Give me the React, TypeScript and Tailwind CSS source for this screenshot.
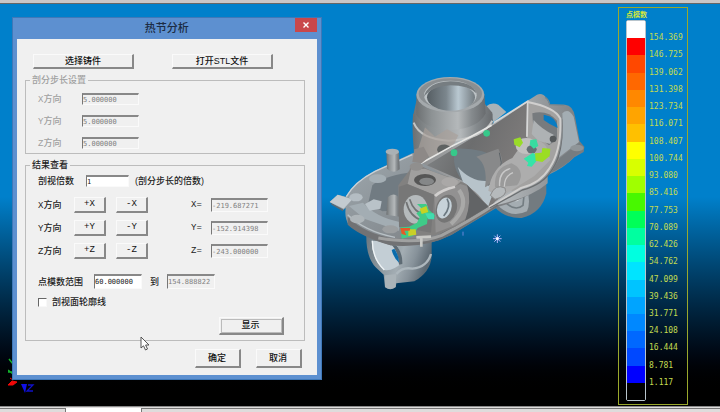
import { useState } from 'react';
import type { ButtonHTMLAttributes, InputHTMLAttributes } from 'react';
import clsx from 'clsx';

interface ScaleStep {
  color: string;
  value?: string;
}

const scale: ScaleStep[] = [
  { color: '#ffffff', value: '154.369' },
  { color: '#ff0000', value: '146.725' },
  { color: '#ff4800', value: '139.062' },
  { color: '#ff6800', value: '131.398' },
  { color: '#ff8800', value: '123.734' },
  { color: '#ffa400', value: '116.071' },
  { color: '#ffc000', value: '108.407' },
  { color: '#ffff00', value: '100.744' },
  { color: '#d8ff00', value: '93.080' },
  { color: '#a0ff00', value: '85.416' },
  { color: '#48f800', value: '77.753' },
  { color: '#00ff58', value: '70.089' },
  { color: '#00ffa0', value: '62.426' },
  { color: '#00ffe0', value: '54.762' },
  { color: '#00e4ff', value: '47.099' },
  { color: '#00c4ff', value: '39.436' },
  { color: '#00a4ff', value: '31.771' },
  { color: '#0088ff', value: '24.108' },
  { color: '#0068ff', value: '16.444' },
  { color: '#0048ff', value: '8.781' },
  { color: '#0000ff', value: '1.117' },
  { color: '#000000' },
];

const steps = [
  { axis: 'X', value: '5.000000' },
  { axis: 'Y', value: '5.000000' },
  { axis: 'Z', value: '5.000000' },
];

const positions = [
  { axis: 'X', value: '-219.687271' },
  { axis: 'Y', value: '-152.914398' },
  { axis: 'Z', value: '-243.000000' },
];

function PushButton({ className, ...props }: ButtonHTMLAttributes<HTMLButtonElement>) {
  return (
    <button
      type="button"
      className={clsx(
        'flex items-center justify-center border border-t-[#fafafa] border-r-2 border-r-[#888] border-b-2 border-b-[#888] border-l-[#fafafa] bg-[#f0f0f0] leading-none font-medium whitespace-nowrap text-[#111] active:bg-[#e4e4e4]',
        className,
      )}
      {...props}
    />
  );
}

function Field({ className, ...props }: InputHTMLAttributes<HTMLInputElement>) {
  return (
    <input
      className={clsx(
        'border border-t-2 border-t-[#888] border-r-[#fafafa] border-b-[#fafafa] border-l-[#777] bg-white font-["DejaVu_Sans_Mono",monospace] text-[7px] leading-none text-[#222] outline-none disabled:bg-[#f0f0f0] disabled:text-[#808080]',
        className,
      )}
      {...props}
    />
  );
}

function AxisLabel({ axis, className }: { axis: string; className: string }) {
  return (
    <span className={className}>
      <span className="font-['Liberation_Mono',monospace]">{axis}</span>方向
    </span>
  );
}

function Casting() {
  return (
    <svg viewBox="0 0 795 675" className="absolute top-[66px] left-[325px] w-[265px]" aria-hidden="true">
      <defs>
        <linearGradient id="tube" x1="0" x2="1">
          <stop offset="0" stopColor="#6c7072" />
          <stop offset="0.22" stopColor="#8d9294" />
          <stop offset="0.6" stopColor="#b4b8ba" />
          <stop offset="0.8" stopColor="#858a8d" />
          <stop offset="1" stopColor="#696c6f" />
        </linearGradient>
        <linearGradient id="bore" x1="0" x2="1">
          <stop offset="0" stopColor="#565e63" />
          <stop offset="0.4" stopColor="#7b868d" />
          <stop offset="0.65" stopColor="#b9c8d1" />
          <stop offset="1" stopColor="#737b80" />
        </linearGradient>
        <linearGradient id="plate" x1="0" y1="0" x2="1" y2="0.6">
          <stop offset="0" stopColor="#a2acb2" />
          <stop offset="0.5" stopColor="#8a9196" />
          <stop offset="1" stopColor="#777779" />
        </linearGradient>
        <linearGradient id="ring" x1="0" y1="0" x2="1" y2="0.3">
          <stop offset="0" stopColor="#6a767e" />
          <stop offset="0.6" stopColor="#a3adb3" />
          <stop offset="0.8" stopColor="#87929a" />
          <stop offset="1" stopColor="#5d6972" />
        </linearGradient>
        <linearGradient id="flank" x1="0" x2="1">
          <stop offset="0" stopColor="#8e8f90" />
          <stop offset="0.5" stopColor="#b3b8bb" />
          <stop offset="1" stopColor="#787b7e" />
        </linearGradient>
        <linearGradient id="pocket" x1="0" x2="1" y2="0.4">
          <stop offset="0" stopColor="#8a8e90" />
          <stop offset="0.45" stopColor="#6c6d6e" />
          <stop offset="1" stopColor="#858180" />
        </linearGradient>
      </defs>

      {/* lower clamp ring */}
      <path d="M124 492 Q122 560 152 592 L176 614 L180 652 Q196 664 212 652 L214 640 L268 634 Q316 606 320 560 L320 508 Z" fill="url(#ring)" />
      <path d="M140 512 Q142 572 178 600 Q204 604 229 580 Q230 542 208 516 Z" fill="#c3ced5" />
      <path d="M196 510 Q234 536 232 582 L222 584 Q220 540 190 514 Z" fill="#5e6b74" />
      <path d="M208 536 Q222 556 222 578 Q206 564 200 540 Z" fill="#0a6cac" />
      <path d="M142 512 Q142 566 178 600" fill="none" stroke="#eef3f5" strokeWidth="4" />
      <path d="M180 616 L214 612 L212 650 Q196 662 180 650 Z" fill="#aab3b8" />
      <path d="M214 612 Q232 590 262 596 Q306 592 318 552" fill="none" stroke="#adb7bd" strokeWidth="7" />

      {/* hub under the right side */}
      <path d="M508 410 Q540 446 590 444 Q650 430 664 370 L664 320 L560 340 Z" fill="#737b80" />
      <path d="M520 408 Q560 446 606 424 Q618 396 606 358 L550 372 Z" fill="#a5adb2" />
      <path d="M540 396 Q570 426 594 406 L598 366" fill="none" stroke="#747d82" strokeWidth="5" />
      <path d="M560 384 Q576 402 586 380" fill="none" stroke="#dae1e4" strokeWidth="4" />

      {/* base plate */}
      <path d="M14 396 L38 374 L62 380 Q90 332 150 302 L262 250 L340 240 L520 340 L660 310 L664 340 Q600 390 520 410 L380 494 Q300 534 196 526 Q118 502 72 466 Q58 446 62 414 L54 420 Z" fill="url(#plate)" />
      <path d="M14 396 L38 374 L82 388 L56 416 Z" fill="#c3cbd0" />
      <path d="M16 398 L54 418 L54 424 L20 404 Z" fill="#60696f" />
      <path d="M64 380 Q88 336 150 304 L262 254" fill="none" stroke="#c9d1d6" strokeWidth="4" />
      <path d="M142 346 Q170 320 250 308 L232 420 L172 424 L130 398 Z" fill="#717b82" />
      <path d="M72 408 L114 398 Q150 440 224 456 L222 482 L118 446 Z" fill="#a3adb3" />
      <path d="M68 440 Q120 492 210 506 L320 506 L520 388 L520 408 L380 494 Q300 536 196 526 Q108 500 68 464 Z" fill="#717274" />
      <path d="M68 434 Q120 484 210 502" fill="none" stroke="#b9c1c6" strokeWidth="4" />
      <path d="M160 504 Q280 524 350 496 Q440 450 520 396" fill="none" stroke="#a0a1a1" strokeWidth="9" />
      <ellipse cx="93" cy="382" rx="20" ry="12" fill="#b4bdc3" />
      <ellipse cx="97" cy="447" rx="22" ry="13" fill="#aeb5b9" />
      <ellipse cx="158" cy="326" rx="26" ry="13" fill="#a5afb5" />
      <ellipse cx="196" cy="478" rx="24" ry="12" fill="#9c9fa1" />
      <path d="M120 402 L146 388 L170 394 L166 416 L134 422 Z" fill="#b9c2c8" />
      <path d="M188 382 Q204 366 220 380 L224 440 L184 434 Z" fill="url(#tube)" />
      <path d="M184 246 L186 296 Q204 314 224 298 L222 246 Z" fill="url(#tube)" />
      <ellipse cx="202" cy="245" rx="20" ry="9" fill="#aab1b5" />

      {/* right bracket */}
      <path d="M482 110 Q500 94 520 104 L544 126 L506 156 Z" fill="#a9b2b7" />
      <path d="M608 92 L636 74 Q654 68 664 84 L674 104 L720 104 Q744 106 750 140 L764 214 L778 230 L776 246 L748 262 Q720 292 668 316 L668 340 Q620 382 520 404 L440 360 L290 278 L506 158 Z" fill="url(#flank)" />
      <path d="M306 286 L510 162 L606 98 L604 200 L672 264 Q650 322 580 342 L490 410 L416 334 Z" fill="url(#pocket)" />
      <path d="M392 236 Q470 232 520 266 Q550 312 492 348 L420 342 Q374 290 392 236 Z" fill="#707b82" />
      <path d="M398 290 Q450 350 520 326 L490 408 L414 336 Z" fill="#b7c3ca" />
      <path d="M454 260 Q490 284 480 352 L520 330 Q544 284 520 236 Z" fill="#88898a" />
      <path d="M523 248 Q544 310 490 346" fill="none" stroke="#5b6267" strokeWidth="3" />
      <path d="M608 96 L630 102 Q690 116 706 148 Q712 238 674 298 Q634 344 560 364 L552 332 L640 286 L604 198 Z" fill="#a3a2a1" />
      <path d="M622 130 Q666 118 696 152 L696 208 L672 226 L626 190 Z" fill="#777b7e" />
      <path d="M656 134 Q694 140 698 174 Q674 164 656 150 Z" fill="#087bc2" />
      <path d="M626 150 Q650 178 686 194 L676 222 L640 212 L620 192 Z" fill="#aeb2b4" />
      <circle cx="684" cy="207" r="10" fill="#55595b" />
      <path d="M506 158 L608 94 L606 200" fill="none" stroke="#d7d8d8" strokeWidth="5" />
      <path d="M608 96 Q690 112 706 146 Q710 240 674 294 Q646 340 588 354 L492 412" fill="none" stroke="#d0cfce" strokeWidth="6" />
      <path d="M494 414 L592 360 Q654 344 682 298 Q718 242 714 148" fill="none" stroke="#6b6e70" strokeWidth="4" />
      <path d="M712 130 Q730 112 746 140 L762 216 L702 262 Q718 210 712 130 Z" fill="#a3adb3" />
      <path d="M704 264 L764 218 L778 232 L748 260 Q718 290 678 308 Z" fill="#767c80" />
      <ellipse cx="756" cy="234" rx="20" ry="10" fill="#8f9598" />
      <path d="M660 82 Q670 86 674 104 L718 106" fill="none" stroke="#7c858a" strokeWidth="4" />

      {/* machined seat inside the pocket */}
      <path d="M490 362 Q500 290 562 264 L590 224 Q634 192 664 230 L676 270 L628 318 L526 382 Z" fill="#adadad" />
      <path d="M510 352 Q506 290 560 280 Q606 302 576 346 Z" fill="#9a9a9a" />
      <path d="M524 350 Q520 304 556 296 M538 350 Q538 318 564 308" fill="none" stroke="#c9c9c9" strokeWidth="4" />
      <path d="M496 376 Q510 340 540 354 Q550 378 510 388 Z" fill="#b6babc" stroke="#8c8c8c" strokeWidth="3" />
      <ellipse cx="604" cy="228" rx="32" ry="24" fill="#c1c0bf" />
      <ellipse cx="620" cy="238" rx="15" ry="12" fill="#667075" />

      {/* upper tube */}
      <path d="M264 138 Q260 170 268 262 L292 278 L384 226 L504 160 L502 128 L478 100 L274 94 Z" fill="url(#tube)" />
      <path d="M264 150 Q280 206 372 212 Q472 206 500 156 L502 132 L264 132 Z" fill="url(#tube)" />
      <path d="M266 158 Q286 208 372 212 Q474 206 502 152" fill="none" stroke="#c3c5c5" strokeWidth="6" />
      <path d="M274 74 L274 134 Q300 178 378 180 Q460 176 482 130 L478 72 Z" fill="url(#tube)" />
      <ellipse cx="376" cy="74" rx="102" ry="53" fill="#a4a9ac" />
      <ellipse cx="376" cy="71" rx="95" ry="46" fill="#8a8f92" />
      <ellipse cx="376" cy="76" rx="79" ry="44" fill="#bcc2c5" />
      <ellipse cx="378" cy="82" rx="72" ry="40" fill="url(#bore)" />
      <path d="M296 82 Q308 36 376 34 Q444 36 454 70 Q430 46 376 46 Q318 50 296 82 Z" fill="#767d81" />
      <path d="M300 172 L330 200 L366 178 L400 196 L384 228 L318 262 L276 248 Z" fill="#a99f9a" opacity="0.65" />
      <path d="M336 240 Q338 222 364 224 L382 232 L342 252 Z" fill="#5f6262" />
      <path d="M288 280 L386 226 L430 204 L500 166" fill="none" stroke="#e6e6e4" strokeWidth="5" />
      <path d="M268 238 L296 230 L312 260 L290 280 L262 276 Z" fill="#8d8987" />

      {/* front block */}
      <path d="M220 346 L254 300 Q254 278 280 284 L326 306 L390 326 L424 342 L490 410 L390 470 L330 496 L280 500 L222 470 Z" fill="#828180" />
      <path d="M248 342 L258 298 L300 296 L354 316 L408 334 L378 362 L334 378 Z" fill="#a09f9e" />
      <path d="M222 350 L246 342 L328 374 L318 488 L222 470 Z" fill="#777777" />
      <path d="M328 376 L406 342 Q456 356 484 408 L390 466 L332 488 Z" fill="#929191" />
      <path d="M330 378 Q350 360 390 350" fill="none" stroke="#d1cfce" strokeWidth="9" />
      <ellipse cx="300" cy="330" rx="33" ry="18" fill="#565656" />
      <ellipse cx="305" cy="334" rx="22" ry="11" fill="#858788" />
      <ellipse cx="374" cy="336" rx="25" ry="14" fill="#aaa8a7" />
      <ellipse cx="274" cy="290" rx="20" ry="12" fill="#908f8e" />
      <ellipse cx="272" cy="418" rx="36" ry="43" fill="#b5babc" />
      <path d="M244 396 Q254 440 292 452 M254 388 Q266 428 302 436" fill="none" stroke="#717374" strokeWidth="5" />
      <ellipse cx="364" cy="416" rx="31" ry="43" transform="rotate(18 364 416)" fill="#757575" />
      <ellipse cx="358" cy="414" rx="21" ry="32" transform="rotate(18 358 414)" fill="#c6d2d9" />
      <path d="M356 438 Q380 410 366 386" fill="none" stroke="#6a777f" strokeWidth="5" />
      <path d="M402 360 Q436 408 378 462" fill="none" stroke="#a9a9a8" strokeWidth="12" />
      <path d="M426 344 L490 410 L420 452 Q442 392 426 344 Z" fill="#626466" />
      <path d="M274 502 L318 500 M289 498 L289 530" stroke="#c9c9c6" strokeWidth="8" />

      {/* hot spots */}
      <path d="M226 472 L252 470 L276 458 L284 442 L274 430 L292 418 L276 402 L304 402 L312 420 L330 436 L326 448 L308 444 L306 462 L278 474 L264 498 L230 506 Z" fill="#3fcb88" />
      <path d="M284 416 L304 408 L310 426 L290 432 Z" fill="#c6d323" />
      <path d="M250 478 L272 478 L274 494 L250 498 Z" fill="#c9cf28" />
      <path d="M226 474 L256 474 L254 482 L238 482 L244 496 L230 492 Z" fill="#e55a29" />
      <path d="M300 430 L326 430 L328 448 L310 448 Z" fill="#42dcb1" />
      <path d="M566 208 L586 202 L594 218 L584 232 L568 224 Z" fill="#9adb28" />
      <path d="M616 210 L634 208 L640 228 L626 236 L614 224 Z" fill="#38dca0" />
      <path d="M596 266 L624 248 L636 258 L634 274 L620 290 L606 288 L610 278 Z" fill="#35e4a8" />
      <path d="M630 250 L650 248 L652 234 L676 236 L674 258 L652 276 L632 272 Z" fill="#9bdd24" />
      <circle cx="485" cy="190" r="10" fill="#36c98a" />
      <circle cx="387" cy="248" r="10" fill="#36c98a" />

      {/* pick marker */}
      <path d="M504 506 H530 M517 493 V519 M508 497 L526 515 M526 497 L508 515" stroke="#b9b6ff" strokeWidth="3" />
      <circle cx="517" cy="506" r="4" fill="#ffffff" />
      <path d="M414 485 V497" stroke="#6a86d8" strokeWidth="3" />
    </svg>
  );
}

function AxisTriad() {
  return (
    <svg viewBox="0 0 30 42" className="absolute bottom-3 left-2 w-[30px]" aria-hidden="true">
      <path d="M1 7 L5 12 M0 18 L5 22 M0 20 L4 20" stroke="#13b32b" strokeWidth="1.5" />
      <path d="M0 33 L4 29 L9 30 L5 33 Z M2 26 L5 28" fill="#f00808" stroke="#f00808" />
      <path d="M13 32 L19 32 L17 41 Z" fill="#1010e8" />
      <path d="M20 33 H25 L19 39 H25" fill="none" stroke="#1010c8" strokeWidth="1.3" />
    </svg>
  );
}

function ColorScale() {
  return (
    <aside className="absolute top-[3px] right-8 bottom-px flex w-[70px] flex-col border border-[#9aa82c] pl-[7px]">
      <h2 className="h-3 text-[7px] leading-[13px] font-bold text-[#d8e838]">点模数</h2>
      <ol className="mb-[3px] flex w-5 flex-1 flex-col rounded-xs border border-[#b8c4cc]">
        {scale.map((step) => (
          <li key={step.color} className="relative flex-1" style={{ backgroundColor: step.color }}>
            {step.value ? (
              <span className="absolute -bottom-1 left-[22px] font-['DejaVu_Sans_Mono',monospace] text-[8px] leading-2 text-[#c4dc50]">
                {step.value}
              </span>
            ) : null}
          </li>
        ))}
      </ol>
    </aside>
  );
}

function HotSpotDialog() {
  const [multiple, setMultiple] = useState('1');
  const [from, setFrom] = useState('60.000000');
  const [outline, setOutline] = useState(false);

  return (
    <section
      role="dialog"
      aria-labelledby="dialog-title"
      className="absolute top-[13px] left-3 w-[43%] min-w-[309px] border border-[#3f78b8] bg-[#5d90d0] px-1 pb-1 text-[9px] leading-[10px] font-medium text-[#222]"
    >
      <header className="grid h-[21px] grid-cols-[1fr_auto_1fr] items-center">
        <h1 id="dialog-title" className="col-start-2 text-[11px] leading-none text-[#1c2c44]">
          热节分析
        </h1>
        <button
          type="button"
          aria-label="关闭"
          className="flex h-3.5 w-[22px] items-center justify-center self-start justify-self-end bg-[#c9474b] text-white"
        >
          <svg viewBox="0 0 8 8" className="size-2" aria-hidden="true">
            <path d="M1.5 1.5 L6.5 6.5 M6.5 1.5 L1.5 6.5" stroke="currentColor" strokeWidth="1.4" />
          </svg>
        </button>
      </header>

      <form className="bg-[#f0f0f0] pt-[15px] pr-3 pb-[7px] pl-2" onSubmit={(e) => e.preventDefault()}>
        <div className="flex gap-[38px] pl-2">
          <PushButton className="h-[15px] w-[101px]">选择铸件</PushButton>
          <PushButton className="h-[15px] w-[101px]">打开STL文件</PushButton>
        </div>

        <fieldset disabled className="mt-1.5 border border-[#bcbcbc] pb-1 pl-3 text-[#a0a0a0]">
          <legend className="-ml-2 px-0.5">剖分步长设置</legend>
          <div className="flex flex-col gap-2.5 pt-2">
            {steps.map((step) => (
              <label key={step.axis} className="flex h-3 items-center">
                <AxisLabel axis={step.axis} className="w-11" />
                <Field className="h-3 w-[57px]" defaultValue={step.value} />
              </label>
            ))}
          </div>
        </fieldset>

        <fieldset className="mt-1.5 border border-[#bcbcbc] pr-5 pb-[5px] pl-3">
          <legend className="-ml-2 px-0.5">结果查看</legend>
          <label className="box-content flex h-3 items-center pt-[5px]">
            <span className="w-12">剖视倍数</span>
            <Field className="mr-1.5 h-3 w-[43px]" value={multiple} onChange={(e) => setMultiple(e.target.value)} />
            (剖分步长的倍数)
          </label>

          <div className="mt-2.5 flex flex-col gap-[7px]">
            {positions.map(({ axis, value }) => (
              <div key={axis} className="flex h-4 items-center">
                <AxisLabel axis={axis} className="w-9" />
                <PushButton className="mr-2.5 h-4 w-8 font-['Liberation_Mono',monospace]">+{axis}</PushButton>
                <PushButton className="h-4 w-8 font-['Liberation_Mono',monospace]">-{axis}</PushButton>
                <label className="ml-[43px] flex items-center">
                  <span className="w-5 font-['Liberation_Mono',monospace]">{axis}=</span>
                  <Field className="h-3.5 w-[57px]" defaultValue={value} disabled />
                </label>
              </div>
            ))}
          </div>

          <div className="mt-[15px] flex h-[15px] items-center">
            <label htmlFor="range-from" className="w-14">
              点模数范围
            </label>
            <Field id="range-from" className="h-[15px] w-12" value={from} onChange={(e) => setFrom(e.target.value)} />
            <label htmlFor="range-to" className="px-2">
              到
            </label>
            <Field id="range-to" className="h-[15px] w-12" defaultValue="154.888822" disabled />
          </div>

          <label className="mt-2 flex h-2.5 items-center gap-[5px]">
            <input
              type="checkbox"
              checked={outline}
              onChange={(e) => setOutline(e.target.checked)}
              className="size-[9px] appearance-none border border-t-[#666] border-r-[#f8f8f8] border-b-[#f8f8f8] border-l-[#666] bg-white checked:bg-[#444]"
            />
            剖视面轮廓线
          </label>

          <div className="mt-2.5 flex justify-end">
            <PushButton className="h-[18px] w-[65px] outline -outline-offset-3 outline-[#bbb]">显示</PushButton>
          </div>
        </fieldset>

        <div className="mt-2 flex justify-end gap-[15px] pr-[3px]">
          <PushButton className="h-[19px] w-[46px]">确定</PushButton>
          <PushButton className="h-[19px] w-[46px]">取消</PushButton>
        </div>
      </form>
    </section>
  );
}

function Cursor() {
  return (
    <svg viewBox="0 0 10 15" className="absolute top-[332px] left-[140px] w-2.5" aria-hidden="true">
      <path d="M1 1 V12 L3.5 9.8 L5.5 14 L7.5 13 L5.6 9 H9 Z" fill="#fff" stroke="#444" strokeWidth="0.9" />
    </svg>
  );
}

export default function App() {
  return (
    <div className="flex min-h-screen flex-col bg-[#e4e2e2] font-['Liberation_Sans','Noto_Sans_CJK_SC',sans-serif]">
      <div className="h-1 border-b border-[#666] bg-[#cac6c6]" />
      <main className="relative min-h-[392px] flex-1 overflow-hidden bg-linear-to-b from-[#0080cb] from-48% to-black to-98%">
        <AxisTriad />
        <Casting />
        <ColorScale />
        <HotSpotDialog />
        <Cursor />
      </main>
      <footer className="flex h-1.5 border-t border-[#8a8a8a] bg-[#dedcdc] pt-px">
        <div className="w-[66px] border-t border-r border-[#777]" />
        <div className="w-[75px] bg-white" />
        <div className="flex-1 border-t border-l border-[#777]" />
      </footer>
    </div>
  );
}
